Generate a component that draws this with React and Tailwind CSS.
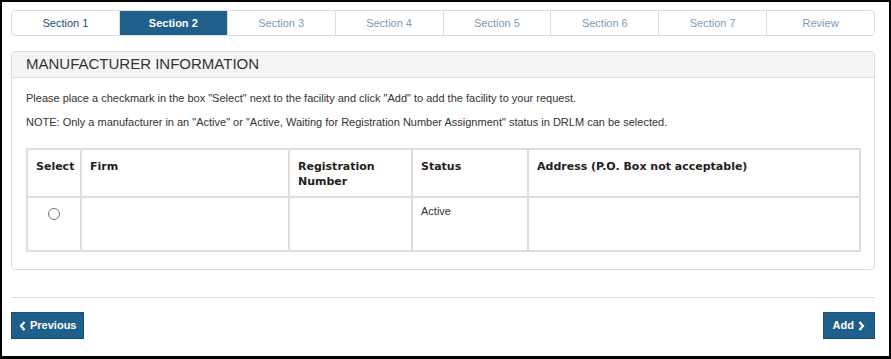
const tabs = ['Section 1', 'Section 2', 'Section 3', 'Section 4', 'Section 5', 'Section 6', 'Section 7', 'Review']

function Tab({ label, index }) {
  const active = index === 1
  const done = index === 0
  return (
    <div
      className={`flex-1 flex items-center justify-center text-[11px] ${index > 0 ? 'border-l border-[#dddddd]' : ''} ${
        active ? 'bg-[#1f5f8b] text-white font-bold' : done ? 'text-[#1f4e75]' : 'text-[#7d9cb6]'
      }`}
    >
      {label}
    </div>
  )
}

export default function App() {
  return (
    <div className="w-[891px] h-[359px] border-l-2 border-t-2 border-r-2 border-b-[3px] border-black bg-white font-['Liberation_Sans',Arial,sans-serif] text-[#333]">
      <div className="w-[864px] ml-[9px] pt-[8px]">
        <div className="flex h-[26px] border border-[#dddddd] rounded-[4px] overflow-hidden">
          {tabs.map((t, i) => (
            <Tab key={t} label={t} index={i} />
          ))}
        </div>

        <div className="mt-[15px] border border-[#dddddd] rounded-[4px]">
          <div className="h-[26px] bg-[#f5f5f5] border-b border-[#dddddd] px-[14px] flex items-center text-[15px] text-[#333] rounded-t-[4px]">
            MANUFACTURER INFORMATION
          </div>
          <div className="px-[14px] pt-[12px] pb-[17px] text-[11px]">
            <p className="leading-[17px]">
              Please place a checkmark in the box "Select" next to the facility and click "Add" to add the facility to your request.
            </p>
            <p className="leading-[17px] mt-[7px]">
              NOTE: Only a manufacturer in an "Active" or "Active, Waiting for Registration Number Assignment" status in DRLM can be selected.
            </p>
            <table className="mt-[17px] w-[835px] border-collapse border-2 border-[#dddddd] table-fixed">
              <thead>
                <tr className="h-[48px] font-['DejaVu_Sans',Verdana,sans-serif] text-[11px] font-bold text-[#222] align-top">
                  <th className="w-[54px] border-2 border-[#dddddd] text-left px-[8px] pt-[9px] leading-[15px]">Select</th>
                  <th className="w-[208px] border-2 border-[#dddddd] text-left px-[8px] pt-[9px] leading-[15px]">Firm</th>
                  <th className="w-[123px] border-2 border-[#dddddd] text-left px-[8px] pt-[9px] leading-[15px]">Registration Number</th>
                  <th className="w-[116px] border-2 border-[#dddddd] text-left px-[8px] pt-[9px] leading-[15px]">Status</th>
                  <th className="border-2 border-[#dddddd] text-left px-[8px] pt-[9px] leading-[15px]">Address (P.O. Box not acceptable)</th>
                </tr>
              </thead>
              <tbody>
                <tr className="h-[54px] align-top text-[11px]">
                  <td className="border-2 border-[#dddddd] pt-[10px]">
                    <div className="flex justify-center">
                      <span className="w-[12px] h-[12px] rounded-full border border-[#767676] bg-white inline-block" />
                    </div>
                  </td>
                  <td className="border-2 border-[#dddddd]" />
                  <td className="border-2 border-[#dddddd]" />
                  <td className="border-2 border-[#dddddd] px-[8px] pt-[5px]">Active</td>
                  <td className="border-2 border-[#dddddd]" />
                </tr>
              </tbody>
            </table>
          </div>
        </div>

        <div className="mt-[27px] border-t border-[#dddddd]" />

        <div className="mt-[14px] flex justify-between">
          <button className="h-[27px] px-[7px] bg-[#1f5f8b] border border-[#1a4f75] text-white text-[11px] font-bold flex items-center gap-[4px]">
            <svg width="7" height="10" viewBox="0 0 7 10">
              <path d="M5.5 1 L2 5 L5.5 9" fill="none" stroke="white" strokeWidth="2.2" />
            </svg>
            Previous
          </button>
          <button className="h-[27px] px-[9px] bg-[#1f5f8b] border border-[#1a4f75] text-white text-[11px] font-bold flex items-center gap-[4px]">
            Add
            <svg width="7" height="10" viewBox="0 0 7 10">
              <path d="M1.5 1 L5 5 L1.5 9" fill="none" stroke="white" strokeWidth="2.2" />
            </svg>
          </button>
        </div>
      </div>
    </div>
  )
}
